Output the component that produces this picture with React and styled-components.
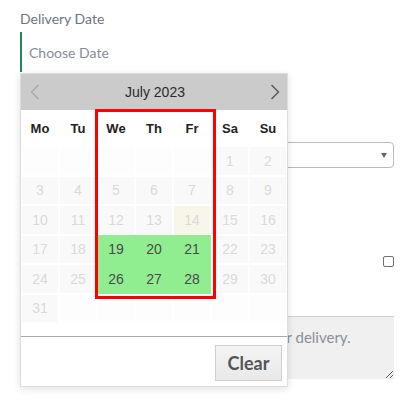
import React from "react";
import styled, { createGlobalStyle } from "styled-components";

const Global = createGlobalStyle`
  html, body { margin: 0; padding: 0; background: #fff; }
  body { font-family: Lato, "Open Sans", sans-serif; }
  * { box-sizing: border-box; }
`;

const Page = styled.div`
  position: relative;
  width: 415px;
  height: 416px;
  padding: 9px 21px 0 20px;
  overflow: hidden;
`;

const Group = styled.div`
  display: flex;
  flex-direction: column;
  gap: ${(p) => p.$gap ?? 3}px;
  margin-top: ${(p) => p.$mt ?? 0}px;
`;

const Label = styled.div`
  font-size: 14px;
  line-height: 20px;
  color: #6c7480;
`;

const DateInput = styled.div`
  height: 40px;
  border-left: 2px solid #1f8a5b;
  display: flex;
  align-items: center;
  padding-left: 7px;
  font-size: 14px;
  color: #868c96;
`;

const Select = styled.div`
  height: 26px;
  border: 1px solid #bbb;
  border-radius: 4px;
  display: flex;
  align-items: center;
  justify-content: flex-end;
  padding-right: 6px;
`;

const Caret = styled.span`
  width: 0;
  height: 0;
  border-left: 3.5px solid transparent;
  border-right: 3.5px solid transparent;
  border-top: 5px solid #666;
`;

const CheckRow = styled.div`
  height: 20px;
  display: flex;
  align-items: center;
  justify-content: space-between;
  font-size: 14px;
  color: #555;
`;

const Check = styled.span`
  width: 11px;
  height: 11px;
  border: 1px solid #6f6f6f;
  border-radius: 2px;
  background: #fff;
`;

const Notes = styled.textarea`
  height: 63px;
  width: 374px;
  border: none;
  border-top: 1px solid #d0d0d0;
  background: #f0f0f0;
  font-family: Lato, "Open Sans", sans-serif;
  font-size: 15px;
  padding: 11px 8px;
  resize: vertical;
  outline: none;
  &::placeholder { color: #8a8f98; }
`;

const Calendar = styled.div`
  position: absolute;
  left: 20px;
  top: 73px;
  width: 268px;
  background: #fff;
  border: 1px solid #ddd;
  box-shadow: 0 2px 8px rgba(0, 0, 0, 0.12);
  font-family: "Liberation Sans", Arial, sans-serif;
`;

const Header = styled.div`
  height: 36px;
  background: #cbcbcb;
  display: flex;
  align-items: center;
  justify-content: space-between;
  padding: 0 7px 0 9px;
`;

const Month = styled.div`
  font-size: 14px;
  color: #2b2b2b;
`;

const Grid = styled.div`
  display: grid;
  grid-template-columns: repeat(7, 1fr);
  grid-auto-rows: ${(p) => p.$row}px;
`;

const DayName = styled.div`
  display: flex;
  align-items: center;
  justify-content: center;
  font-weight: bold;
  font-size: 13px;
  color: #222;
`;

const Cell = styled.div`
  display: flex;
  align-items: center;
  justify-content: center;
  font-size: 14px;
  border: 1px solid ${(p) => (p.$hl ? "#90ee90" : "#fff")};
  background: ${(p) =>
    p.$hl ? "#90ee90" : p.$today ? "#f8f6e9" : p.$empty ? "#fdfdfd" : "#f9f9f9"};
  color: ${(p) => (p.$hl ? "#4a4a4a" : "#d9d9d9")};
`;

const Spacer = styled.div`
  height: 13px;
`;

const Footer = styled.div`
  height: 50px;
  border-top: 1px solid #aaa;
  display: flex;
  justify-content: flex-end;
  align-items: flex-start;
  padding: 8px 5px 0 0;
`;

const ClearBtn = styled.button`
  width: 67px;
  height: 36px;
  border: 1px solid #cfcfcf;
  background: linear-gradient(#f4f4f4, #e9e9e9);
  font-family: Lato, "Open Sans", sans-serif;
  font-weight: bold;
  font-size: 18px;
  color: #555;
  padding: 0;
`;

const Highlight = styled.div`
  position: absolute;
  left: 74px;
  top: 35px;
  width: 121px;
  height: 190px;
  border: 3px solid #f00;
  pointer-events: none;
`;

const Chevron = ({ dir, color }) => (
  <svg width="10" height="16" viewBox="0 0 10 16">
    <polyline
      points={dir === "left" ? "8.5,1 1.5,8 8.5,15" : "1.5,1 8.5,8 1.5,15"}
      fill="none"
      stroke={color}
      strokeWidth="1.3"
    />
  </svg>
);

const names = ["Mo", "Tu", "We", "Th", "Fr", "Sa", "Su"];
const green = [19, 20, 21, 26, 27, 28];

export default function App() {
  const cells = [];
  for (let i = 0; i < 5; i++) cells.push({ key: "e" + i, empty: true });
  for (let d = 1; d <= 31; d++) cells.push({ key: "d" + d, d });
  for (let i = 0; i < 6; i++) cells.push({ key: "t" + i, empty: true });

  return (
    <Page>
      <Global />
      <Group>
        <Label>Delivery Date</Label>
        <DateInput>Choose Date</DateInput>
      </Group>
      <Group $mt={46} $gap={4}>
        <Label>Delivery Time</Label>
        <Select>
          <Caret />
        </Select>
      </Group>
      <Group $mt={83}>
        <CheckRow>
          <span>Leave at door</span>
          <Check />
        </CheckRow>
      </Group>
      <Group $mt={20} $gap={5}>
        <Label>Notes</Label>
        <Notes placeholder="Add any special instructions or notes for delivery." />
      </Group>

      <Calendar>
        <Header>
          <Chevron dir="left" color="#a8a8a8" />
          <Month>July 2023</Month>
          <Chevron dir="right" color="#555" />
        </Header>
        <Grid $row={36}>
          {names.map((n) => (
            <DayName key={n}>{n}</DayName>
          ))}
        </Grid>
        <Grid $row={29.5}>
          {cells.map((c) => (
            <Cell
              key={c.key}
              $empty={c.empty}
              $hl={green.includes(c.d)}
              $today={c.d === 14}
            >
              {c.d || ""}
            </Cell>
          ))}
        </Grid>
        <Spacer />
        <Footer>
          <ClearBtn>Clear</ClearBtn>
        </Footer>
        <Highlight />
      </Calendar>
    </Page>
  );
}
